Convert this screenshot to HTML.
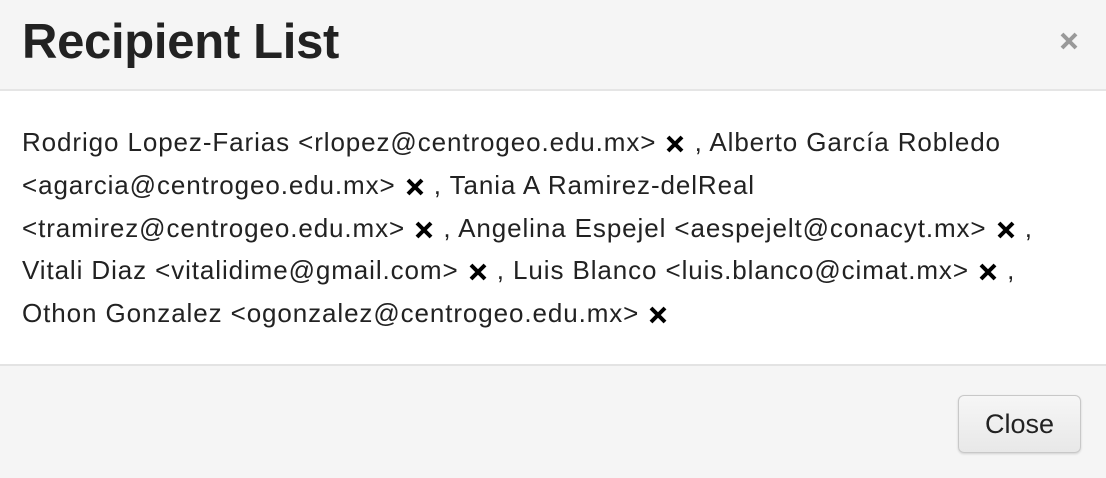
<!DOCTYPE html>
<html><head><style>
*{margin:0;padding:0;box-sizing:border-box}
body{width:1106px;height:478px;overflow:hidden;background:#f5f5f5;font-family:"Liberation Sans",sans-serif;color:#222;position:relative}
.hdr{position:absolute;left:0;top:0;width:1106px;height:91px;background:#f5f5f5;border-bottom:2px solid #e5e5e5}
.hdr h1{position:absolute;left:22px;top:13px;font-size:49px;font-weight:bold;color:#222;letter-spacing:-0.3px;line-height:58px}
.cl{position:absolute;left:1059px;top:31px}
.bd{position:absolute;left:0;top:91px;width:1106px;height:275px;background:#fff;border-bottom:2px solid #e3e3e3}
.ln{position:absolute;left:22px;font-size:26px;letter-spacing:0.9px;white-space:nowrap;color:#222;line-height:30px}
.x{display:inline-block;width:18px;height:18px;vertical-align:-2px;margin:0 2px}
.btn{position:absolute;left:958px;top:395px;width:123px;height:58px;border:1px solid #c8c8c8;border-radius:6px;background:linear-gradient(#f6f6f6,#e8e8e8);box-shadow:0 1px 2px rgba(0,0,0,.15);font-size:27px;text-align:center;line-height:56px;color:#222}
</style></head><body>
<div class="hdr"><h1>Recipient List</h1>
<svg class="cl" width="20" height="20" viewBox="0 0 20 20"><path d="M3 3L17 17M17 3L3 17" stroke="#999" stroke-width="4"/></svg></div>
<div class="bd"></div>
<div class="ln" style="top:127px">Rodrigo Lopez-Farias &lt;rlopez@centrogeo.edu.mx&gt; <svg class="x" viewBox="0 0 18 18"><path d="M2 2L16 16M16 2L2 16" stroke="#000" stroke-width="4"/></svg> , Alberto García Robledo</div>
<div class="ln" style="top:170px">&lt;agarcia@centrogeo.edu.mx&gt; <svg class="x" viewBox="0 0 18 18"><path d="M2 2L16 16M16 2L2 16" stroke="#000" stroke-width="4"/></svg> , Tania A Ramirez-delReal</div>
<div class="ln" style="top:213px">&lt;tramirez@centrogeo.edu.mx&gt; <svg class="x" viewBox="0 0 18 18"><path d="M2 2L16 16M16 2L2 16" stroke="#000" stroke-width="4"/></svg> , Angelina Espejel &lt;aespejelt@conacyt.mx&gt; <svg class="x" viewBox="0 0 18 18"><path d="M2 2L16 16M16 2L2 16" stroke="#000" stroke-width="4"/></svg> ,</div>
<div class="ln" style="top:255px">Vitali Diaz &lt;vitalidime@gmail.com&gt; <svg class="x" viewBox="0 0 18 18"><path d="M2 2L16 16M16 2L2 16" stroke="#000" stroke-width="4"/></svg> , Luis Blanco &lt;luis.blanco@cimat.mx&gt; <svg class="x" viewBox="0 0 18 18"><path d="M2 2L16 16M16 2L2 16" stroke="#000" stroke-width="4"/></svg> ,</div>
<div class="ln" style="top:298px">Othon Gonzalez &lt;ogonzalez@centrogeo.edu.mx&gt; <svg class="x" viewBox="0 0 18 18"><path d="M2 2L16 16M16 2L2 16" stroke="#000" stroke-width="4"/></svg></div>
<div class="btn">Close</div>
</body></html>
